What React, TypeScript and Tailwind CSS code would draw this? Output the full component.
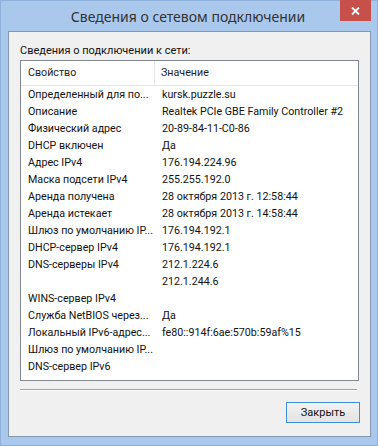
const rows: [string, string][] = [
  ["Определенный для по...", "kursk.puzzle.su"],
  ["Описание", "Realtek PCIe GBE Family Controller #2"],
  ["Физический адрес", "20-89-84-11-C0-86"],
  ["DHCP включен", "Да"],
  ["Адрес IPv4", "176.194.224.96"],
  ["Маска подсети IPv4", "255.255.192.0"],
  ["Аренда получена", "28 октября 2013 г. 12:58:44"],
  ["Аренда истекает", "28 октября 2013 г. 14:58:44"],
  ["Шлюз по умолчанию IP...", "176.194.192.1"],
  ["DHCP-сервер IPv4", "176.194.192.1"],
  ["DNS-серверы IPv4", "212.1.224.6"],
  ["", "212.1.244.6"],
  ["WINS-сервер IPv4", ""],
  ["Служба NetBIOS через...", "Да"],
  ["Локальный IPv6-адрес...", "fe80::914f:6ae:570b:59af%15"],
  ["Шлюз по умолчанию IP...", ""],
  ["DNS-сервер IPv6", ""],
];

export default function App() {
  return (
    <div className="w-[378px] h-[446px] bg-[#aac8ec] flex flex-col border border-[#8eb0da] font-['Roboto','Noto_Sans',sans-serif] text-[10.7px] text-[#111]">
      {/* title bar */}
      <div className="relative h-[30px] flex items-center justify-center shrink-0">
        <span className="text-[14px] text-[#333] font-['Noto_Sans',sans-serif] pr-[2px]">Сведения о сетевом подключении</span>
        <div className="absolute top-[-1px] right-[6px] w-[31px] h-[21px] bg-[#c7504b] flex items-center justify-center">
          <svg width="9" height="8" viewBox="0 0 9 8">
            <path d="M1 0.5 L8 7.5 M8 0.5 L1 7.5" stroke="white" strokeWidth="1.8" />
          </svg>
        </div>
      </div>

      {/* client area */}
      <div className="ml-[7px] mr-[6px] mb-[8px] flex-1 bg-[#f0f0f0] border border-[#8597ad] flex flex-col">
        <div className="mt-[11px] ml-[11px] leading-[15px] text-[11px]">Сведения о подключении к сети:</div>

        <div className="mt-[2px] ml-[11px] w-[339px] h-[321px] bg-white border border-[#828790] flex flex-col">
          <div className="h-[25px] flex shrink-0 border-b border-[#e5e5e5] text-[#1e1e1e]">
            <div className="w-[134px] shrink-0 pl-[7px] flex items-center border-r border-[#e5e5e5]">Свойство</div>
            <div className="pl-[6px] flex items-center">Значение</div>
          </div>
          {rows.map(([k, v], i) => (
            <div key={i} className="h-[17px] shrink-0 flex items-center leading-[17px]">
              <div className="w-[134px] shrink-0 pl-[7px] whitespace-nowrap overflow-hidden">{k}</div>
              <div className="pl-[7px] whitespace-nowrap overflow-hidden">{v}</div>
            </div>
          ))}
        </div>

        <div className="mt-[8px] ml-[11px] w-[337px] h-[2px] border-t border-[#a0a0a0] border-b border-b-white" />

        <div className="mt-[11px] ml-[277px] w-[74px] h-[21px] border border-[#3c8fd0] bg-gradient-to-b from-[#f2f2f2] to-[#e3e3e3] flex items-center justify-center leading-none text-[11px]">
          Закрыть
        </div>
      </div>
    </div>
  );
}
